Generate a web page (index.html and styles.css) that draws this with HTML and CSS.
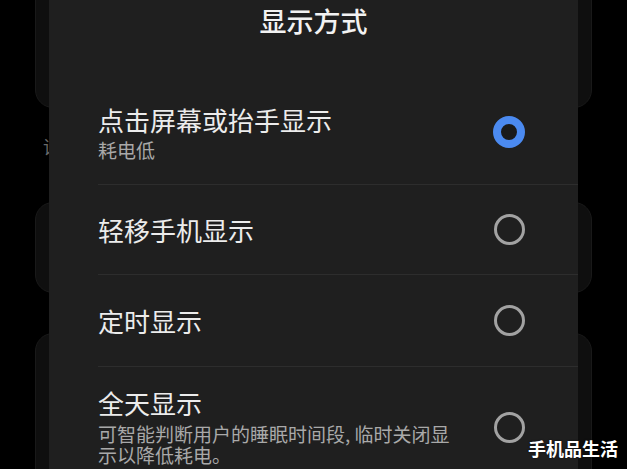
FILE: index.html
```html
<!DOCTYPE html>
<html lang="zh-CN">
<head>
<meta charset="utf-8">
<title>显示方式</title>
<link rel="stylesheet" href="styles.css">
</head>
<body>
<div class="screen">
  <div class="backdrop">
    <div class="card card-top"></div>
    <div class="section-label">请</div>
    <div class="card card-mid"></div>
    <div class="card card-bottom"></div>
  </div>

  <div class="dialog">
    <div class="dialog-title">显示方式</div>
    <div class="options">
      <div class="option option-first">
        <div class="option-text">
          <div class="option-title">点击屏幕或抬手显示</div>
          <div class="option-desc">耗电低</div>
        </div>
        <span class="radio radio-on"></span>
      </div>
      <div class="option option-plain">
        <div class="option-text">
          <div class="option-title">轻移手机显示</div>
        </div>
        <span class="radio"></span>
      </div>
      <div class="option option-plain option-third">
        <div class="option-text">
          <div class="option-title">定时显示</div>
        </div>
        <span class="radio"></span>
      </div>
      <div class="option option-last">
        <div class="option-text option-text-long">
          <div class="option-title">全天显示</div>
          <div class="option-desc option-desc-long">可智能判断用户的睡眠时间段, 临时关闭显示以降低耗电。</div>
        </div>
        <span class="radio"></span>
      </div>
    </div>
  </div>

  <div class="watermark">手机品生活</div>
</div>
</body>
</html>
```

FILE: styles.css
```css
* {
  box-sizing: border-box;
}

html, body {
  margin: 0;
  padding: 0;
  background: #000;
}

body {
  width: 627px;
  height: 469px;
  overflow: hidden;
  font-family: "Noto Sans CJK SC", "Noto Sans", sans-serif;
}

.screen {
  position: relative;
  width: 627px;
  height: 469px;
  overflow: hidden;
  background: #000;
}

/* background page behind the dialog */
.backdrop {
  display: flex;
  flex-direction: column;
  padding: 0 35px;
}

.card {
  background: #0f0f0f;
  border: 1px solid #191919;
  border-radius: 18px;
}

.card-top {
  height: 128px;
  margin-top: -20px;
}

.section-label {
  height: 94px;
  padding-top: 26px;
  padding-left: 8px;
  font-size: 18px;
  line-height: 24px;
  color: #6a6a6a;
}

.card-mid {
  height: 91px;
}

.card-bottom {
  height: 200px;
  margin-top: 40px;
}

/* dialog sheet */
.dialog {
  position: absolute;
  top: -30px;
  left: 49px;
  width: 529px;
  bottom: -40px;
  background: #1f1f1f;
  border-radius: 24px;
}

.dialog-title {
  padding-top: 33px;
  padding-bottom: 41px;
  font-size: 27px;
  line-height: 36px;
  font-weight: 500;
  color: #f2f2f2;
  text-align: center;
}

.options {
  padding-left: 49px;
}

.option {
  display: flex;
  align-items: center;
  justify-content: space-between;
  padding-right: 53px;
  border-bottom: 1px solid #2d2d2d;
}

.option-first {
  height: 105px;
}

.option-plain {
  height: 90px;
}

.option-third {
  height: 92px;
}

.option-last {
  height: 121px;
  border-bottom: none;
}

.option-text {
  display: flex;
  flex-direction: column;
  gap: 2px;
}

.option-text-long {
  gap: 3px;
  margin-bottom: 5px;
}

.option-title {
  font-size: 26px;
  line-height: 34px;
  color: #ececec;
}

.option-desc {
  font-size: 19px;
  line-height: 22px;
  color: #a9a9a9;
}

.option-desc-long {
  width: 366px;
  line-height: 21px;
}

.radio {
  flex: none;
  width: 31px;
  height: 31px;
  border-radius: 50%;
  border: 3px solid #a2a2a2;
}

.radio-on {
  width: 32px;
  height: 32px;
  border: 8px solid #4b8af0;
  background: #1a1a1a;
}

.watermark {
  position: absolute;
  right: 9px;
  bottom: 12px;
  font-size: 18px;
  line-height: 18px;
  font-weight: 700;
  color: #fff;
  text-shadow: 0 0 2px rgba(0, 0, 0, 0.8);
}
```
